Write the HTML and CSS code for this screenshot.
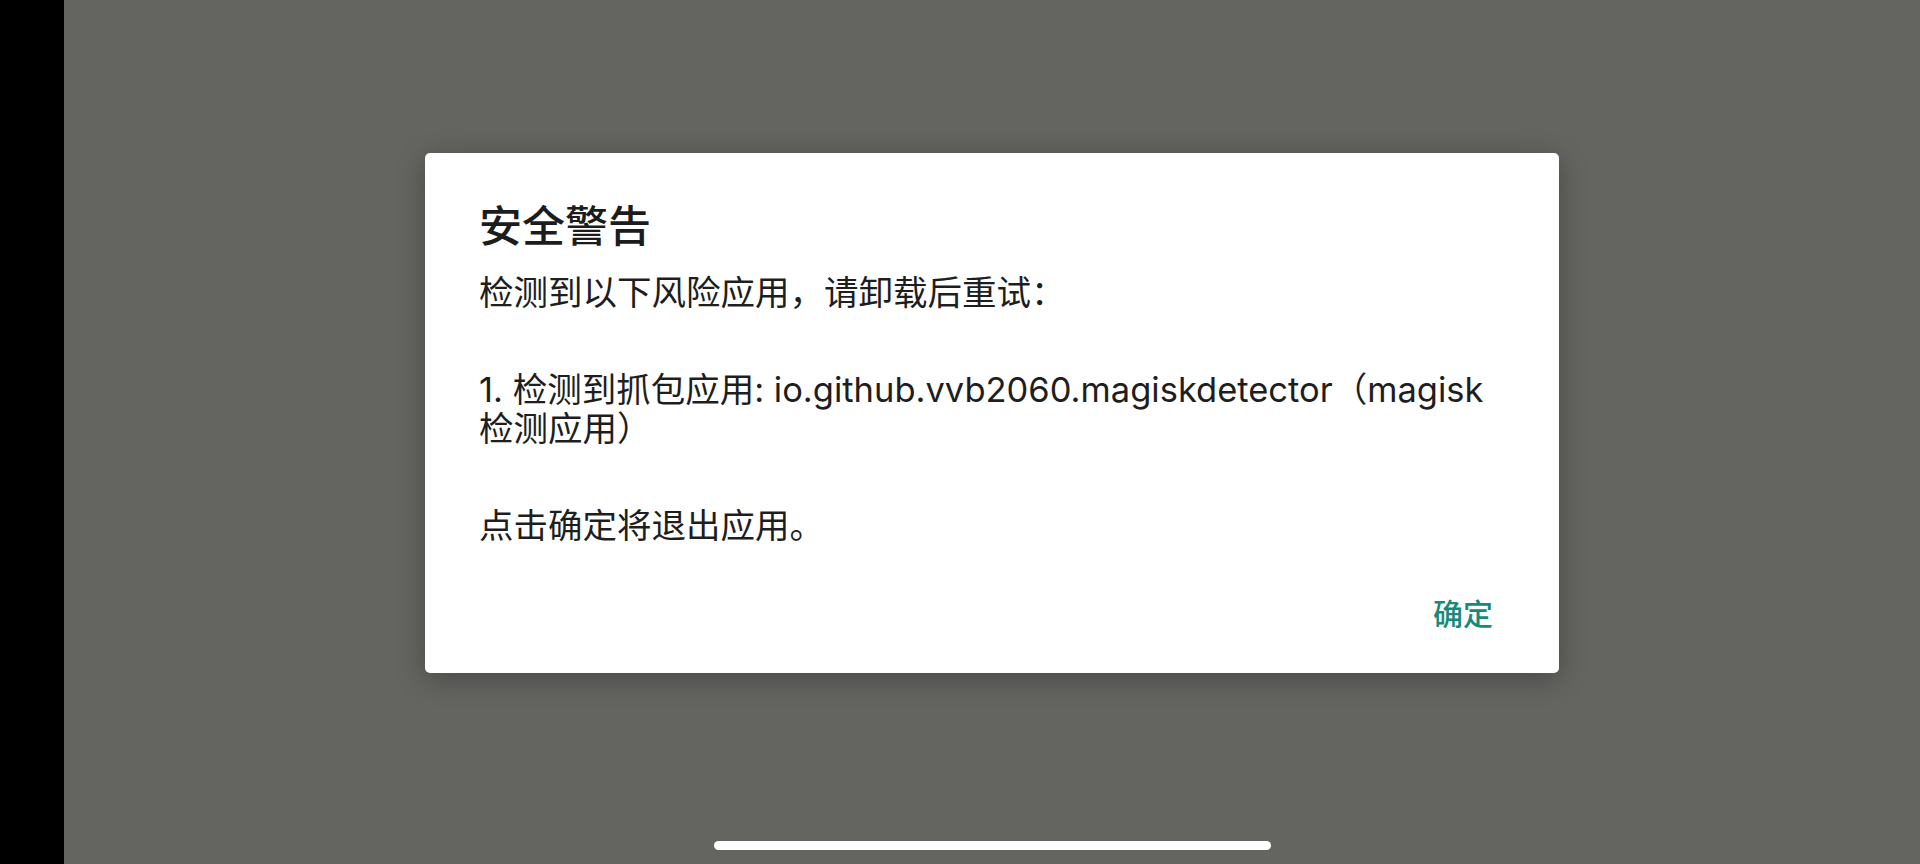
FILE: index.html
```html
<!doctype html>
<html lang="zh-CN">
 <head>
  <meta charset="UTF-8">
  <meta name="viewport" content="width=device-width, initial-scale=1.0">
  <title>安全警告</title>
  <link rel="stylesheet" href="styles.css">
 </head>
 <body>
  <div class="nav-strip"></div>
  <div class="screen">
   <div class="dialog">
    <h1 class="dialog-title">安全警告</h1>
    <div class="dialog-body">
     <p>检测到以下风险应用，请卸载后重试：</p>
     <p>1. 检测到抓包应用: io.github.vvb2060.magiskdetector（magisk检测应用）</p>
     <p>点击确定将退出应用。</p>
    </div>
    <div class="dialog-actions">
     <button class="btn-ok">确定</button>
    </div>
   </div>
   <div class="home-bar"></div>
  </div>
 </body>
</html>
```

FILE: styles.css
```css
* {
  margin: 0;
  padding: 0;
  box-sizing: border-box;
}

body {
  display: flex;
  height: 864px;
  overflow: hidden;
  font-family: Inter, "Noto Sans CJK SC", sans-serif;
  background: #646561;
}

.nav-strip {
  width: 64px;
  background: #000;
}

.screen {
  flex: 1;
  display: flex;
  flex-direction: column;
  align-items: center;
  background: #646561;
}

.dialog {
  width: 1134px;
  margin-top: 153px;
  padding: 42px 54px 29px;
  background: #fff;
  border-radius: 5px;
  box-shadow: 0 6px 28px rgba(0, 0, 0, 0.28);
}

.dialog-title {
  font-size: 43px;
  line-height: 56px;
  font-weight: 500;
  color: #1c1c1c;
  font-family: "Noto Sans CJK SC", sans-serif;
}

.dialog-body {
  margin-top: 22px;
  font-size: 34.5px;
  line-height: 39px;
  font-weight: 400;
  color: #1e1e1e;
}

.dialog-body p {
  margin-bottom: 58px;
}

.dialog-body p:last-child {
  margin-bottom: 0;
}

.dialog-actions {
  display: flex;
  justify-content: flex-end;
  margin-top: 35px;
}

.btn-ok {
  border: none;
  background: none;
  padding: 0 12px;
  height: 64px;
  line-height: 64px;
  font-family: "Noto Sans CJK SC", sans-serif;
  font-size: 30px;
  font-weight: 500;
  color: #178a7c;
  cursor: pointer;
}

.home-bar {
  width: 557px;
  height: 9px;
  margin-top: auto;
  margin-bottom: 14px;
  border-radius: 5px;
  background: #fff;
}
```
